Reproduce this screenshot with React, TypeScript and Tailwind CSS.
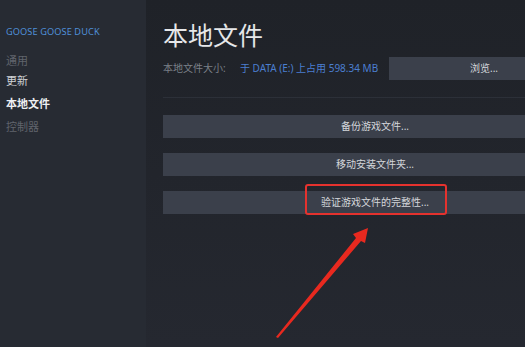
const cjk = "font-['Noto_Sans','Noto_Sans_CJK_SC',sans-serif]"

function SideItem({ label, tone, h = 'h-[23px]' }: { label: string; tone: 'dim' | 'light' | 'active'; h?: string }) {
  const color =
    tone === 'dim' ? 'text-[#60646c]' : tone === 'active' ? 'text-[#eef0f2] font-bold' : 'text-[#cfd2d6]'
  return <div className={`${h} leading-[22px] text-[11px] ${color}`}>{label}</div>
}

function WideButton({ label }: { label: string }) {
  return (
    <div className="h-[23px] w-[424px] shrink-0 bg-[#3b404b] text-center text-[10px] leading-[23px] text-[#d4d7db]">
      {label}
    </div>
  )
}

export default function App() {
  return (
    <div className={`relative flex h-[347px] w-[525px] overflow-hidden bg-[#23262d] ${cjk}`}>
      <aside className="w-[146px] shrink-0 bg-[#272b33] pl-[6px] pt-[26px]">
        <div className="mb-[12px] whitespace-nowrap text-[9.2px] leading-[12px] tracking-[0.1px] text-[#4f8fd8]">
          GOOSE GOOSE DUCK
        </div>
        <SideItem label="通用" tone="dim" h="h-[20px]" />
        <SideItem label="更新" tone="light" />
        <SideItem label="本地文件" tone="active" />
        <SideItem label="控制器" tone="dim" />
      </aside>

      <main className="min-w-0 flex-1 overflow-hidden bg-gradient-to-b from-[#1f2228] to-[#252830] pl-[17px]">
        <h1 className="mt-[19px] h-[32px] whitespace-nowrap text-[25px] leading-[32px] text-[#e6e7e9]">本地文件</h1>
        <div className="mt-[6px] flex h-[23px] items-center whitespace-nowrap">
          <span className="w-[77px] shrink-0 text-[10px] text-[#7b8088]">本地文件大小:</span>
          <span className="w-[149px] shrink-0 text-[10px] text-[#4b7fd1]">于 DATA (E:) 上占用 598.34 MB</span>
          <div className="h-[23px] w-[192px] shrink-0 bg-[#3b404b] pl-[81px] text-left text-[10px] leading-[23px] text-[#d4d7db]">
            浏览...
          </div>
        </div>
        <div className="mt-[17px] h-px w-[400px] bg-[#2c3038]" />
        <div className="mt-[17px] flex w-[424px] flex-col gap-[15px]">
          <WideButton label="备份游戏文件..." />
          <WideButton label="移动安装文件夹..." />
          <WideButton label="验证游戏文件的完整性..." />
        </div>
      </main>

      <div className="absolute left-[305px] top-[184px] h-[31px] w-[142px] rounded-[3px] border-2 border-[#e5322e]" />
      <svg className="absolute left-0 top-0" width="525" height="347" viewBox="0 0 525 347">
        <polygon points="276,337 356,238 353,234 368,228 365,243 361,241 278,338" fill="#e8291f" />
      </svg>
    </div>
  )
}
